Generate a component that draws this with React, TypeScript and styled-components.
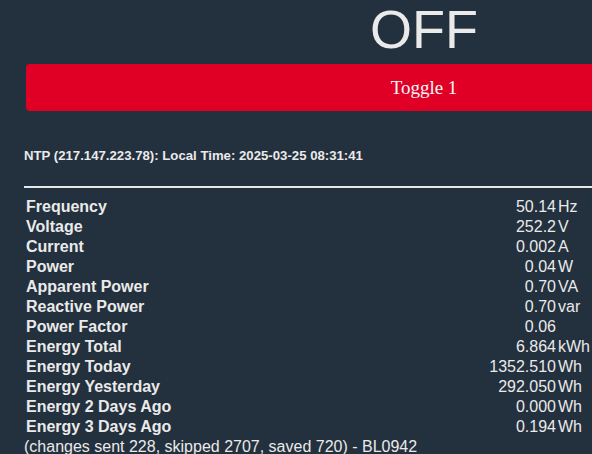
import React from "react";
import styled, { createGlobalStyle } from "styled-components";

const Global = createGlobalStyle`
  html, body {
    margin: 0;
    padding: 0;
    background: #23303d;
    overflow: hidden;
  }
  body {
    width: 592px;
    height: 454px;
    font-family: "Liberation Sans", Arial, sans-serif;
    color: #eaeaea;
  }
`;

const Page = styled.div`
  width: 592px;
  height: 454px;
  overflow: hidden;
  padding-left: 24px;
  box-sizing: border-box;
`;

const Top = styled.div`
  margin-left: 2px;
  width: 796px;
  display: flex;
  flex-direction: column;
`;

const State = styled.div`
  font-size: 54px;
  line-height: 56px;
  height: 56px;
  padding-top: 1px;
  box-sizing: border-box;
  text-align: center;
  color: #eaeaea;
`;

const ToggleButton = styled.button`
  margin-top: 8px;
  height: 47px;
  width: 100%;
  border: 0;
  border-radius: 4px;
  background: #e00026;
  color: #f6f6f6;
  font-family: "Liberation Serif", "Times New Roman", serif;
  font-size: 19px;
  line-height: 47px;
  padding: 0;
  cursor: pointer;
`;

const Ntp = styled.div`
  margin-top: 37px;
  font-size: 13.2px;
  line-height: 15px;
  font-weight: bold;
`;

const Rule = styled.div`
  margin-top: 23px;
  height: 2px;
  width: 568px;
  background: #e6e8ea;
`;

const Table = styled.div`
  margin-top: 8px;
  width: 568px;
  box-sizing: border-box;
  padding: 2px;
  display: grid;
  grid-template-columns: 1fr auto auto;
  column-gap: 2px;
  row-gap: 2px;
  font-size: 16px;
  line-height: 18px;
`;

const Name = styled.div`
  font-weight: bold;
`;

const Value = styled.div`
  text-align: right;
`;

const Unit = styled.div`
  text-align: left;
`;

const Footer = styled.div`
  font-size: 16px;
  line-height: 18px;
  white-space: nowrap;
`;

const rows: [string, string, string][] = [
  ["Frequency", "50.14", "Hz"],
  ["Voltage", "252.2", "V"],
  ["Current", "0.002", "A"],
  ["Power", "0.04", "W"],
  ["Apparent Power", "0.70", "VA"],
  ["Reactive Power", "0.70", "var"],
  ["Power Factor", "0.06", ""],
  ["Energy Total", "6.864", "kWh"],
  ["Energy Today", "1352.510", "Wh"],
  ["Energy Yesterday", "292.050", "Wh"],
  ["Energy 2 Days Ago", "0.000", "Wh"],
  ["Energy 3 Days Ago", "0.194", "Wh"],
];

export default function App() {
  return (
    <>
      <Global />
      <Page>
        <Top>
          <State>OFF</State>
          <ToggleButton>Toggle 1</ToggleButton>
        </Top>
        <Ntp>NTP (217.147.223.78): Local Time: 2025-03-25 08:31:41</Ntp>
        <Rule />
        <Table>
          {rows.map(([n, v, u]) => (
            <React.Fragment key={n}>
              <Name>{n}</Name>
              <Value>{v}</Value>
              <Unit>{u}</Unit>
            </React.Fragment>
          ))}
        </Table>
        <Footer>(changes sent 228, skipped 2707, saved 720) - BL0942</Footer>
      </Page>
    </>
  );
}
